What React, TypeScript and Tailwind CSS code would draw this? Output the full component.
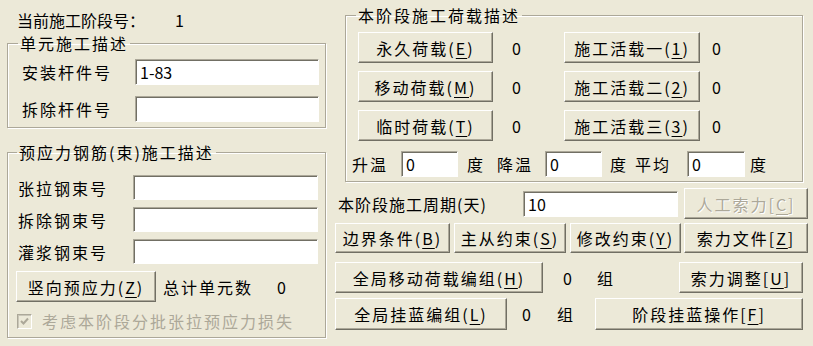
import type { ReactNode } from "react";

const face = "bg-[#ECE9D8]";

function Btn({
  children,
  className = "",
  disabled = false,
}: {
  children: ReactNode;
  className?: string;
  disabled?: boolean;
}) {
  return (
    <button
      className={`flex shrink-0 items-center justify-center border border-t-white border-l-white border-r-[#716F64] border-b-[#716F64] ${face} shadow-[inset_-1px_-1px_0_#ACA899] leading-[20px] tracking-[2px] ${
        disabled ? "text-[#ACA899] [text-shadow:1px_1px_0_#fff]" : "text-black"
      } ${className}`}
    >
      {children}
    </button>
  );
}

function Edit({ value = "", className = "" }: { value?: string; className?: string }) {
  return (
    <input
      readOnly
      value={value}
      className={`shrink-0 border border-t-[#ACA899] border-l-[#ACA899] border-r-white border-b-white bg-white px-[4px] text-[16px] leading-[20px] text-black shadow-[inset_1px_1px_0_#716F64] outline-none ${className}`}
    />
  );
}

function Group({
  title,
  className = "",
  legendClass = "",
  children,
}: {
  title: string;
  className?: string;
  legendClass?: string;
  children: ReactNode;
}) {
  return (
    <fieldset
      className={`border border-[#ACA899] shadow-[inset_1px_1px_0_#fff,1px_1px_0_#fff] ${className}`}
    >
      <legend className={`px-[2px] leading-[20px] tracking-[2px] ${legendClass}`}>{title}</legend>
      {children}
    </fieldset>
  );
}

function Key({ k }: { k: string }) {
  return <u className="underline-offset-[3px]">{k}</u>;
}

export default function App() {
  return (
    <div className="flex h-[346px] w-[813px] bg-[#ECE9D8] font-['Noto_Sans_CJK_SC',sans-serif] text-[16px] text-black">
      {/* left column */}
      <div className="w-[335px] shrink-0 pl-[7px] pt-[10px]">
        <div className="h-[20px] pl-[10px] leading-[20px]">
          当前施工阶段号：<span className="ml-[30px]">1</span>
        </div>

        <Group title="单元施工描述" className="mt-[3px] w-[319px] pb-[5px]" legendClass="ml-[10px]">
          <div className="mt-[6px] flex items-center pl-[14px]">
            <span className="w-[113px] tracking-[2px]">安装杆件号</span>
            <Edit value="1-83" className="h-[26px] w-[184px]" />
          </div>
          <div className="mt-[11px] flex items-center pl-[14px]">
            <span className="w-[113px] tracking-[2px]">拆除杆件号</span>
            <Edit className="h-[26px] w-[184px]" />
          </div>
        </Group>

        <Group
          title="预应力钢筋(束)施工描述"
          className="mt-[14px] w-[319px] pb-[6px]"
          legendClass="ml-[9px]"
        >
          <div className="mt-[13px] flex flex-col gap-[7px] pl-[10px]">
            {["张拉钢束号", "拆除钢束号", "灌浆钢束号"].map((t) => (
              <div key={t} className="flex items-center">
                <span className="w-[115px] tracking-[2px]">{t}</span>
                <Edit className="h-[25px] w-[185px]" />
              </div>
            ))}
          </div>
          <div className="mt-[7px] flex items-center pl-[8px]">
            <Btn className="h-[31px] w-[140px]">
              竖向预应力(<Key k="Z" />)
            </Btn>
            <span className="ml-[7px] tracking-[2px]">总计单元数</span>
            <span className="ml-[24px]">0</span>
          </div>
          <div className="mt-[9px] flex h-[20px] items-center pl-[9px]">
            <span className="flex h-[15px] w-[15px] items-center justify-center border border-t-[#ACA899] border-l-[#ACA899] border-r-white border-b-white shadow-[inset_1px_1px_0_#C9C6B8]">
              <svg width="11" height="11" viewBox="0 0 11 11">
                <path d="M2 5 L4.5 7.5 L9 2.5" fill="none" stroke="#ACA899" strokeWidth="2" />
              </svg>
            </span>
            <span className="ml-[10px] tracking-[2px] text-[#ACA899]">考虑本阶段分批张拉预应力损失</span>
          </div>
        </Group>
      </div>

      {/* right column */}
      <div className="w-[473px] shrink-0 pt-[5px]">
        <Group title="本阶段施工荷载描述" className="ml-[10px] w-[458px] pb-[4px]" legendClass="ml-[10px]">
          <div className="mt-[7px] grid grid-cols-[135px_71px_136px_1fr] gap-y-[8px] pl-[12px]">
            <Btn className="h-[31px]">
              永久荷载(<Key k="E" />)
            </Btn>
            <span className="flex items-center pl-[19px]">0</span>
            <Btn className="h-[31px]">
              施工活载一(<Key k="1" />)
            </Btn>
            <span className="flex items-center pl-[12px]">0</span>

            <Btn className="h-[31px]">
              移动荷载(<Key k="M" />)
            </Btn>
            <span className="flex items-center pl-[19px]">0</span>
            <Btn className="h-[31px]">
              施工活载二(<Key k="2" />)
            </Btn>
            <span className="flex items-center pl-[12px]">0</span>

            <Btn className="h-[31px]">
              临时荷载(<Key k="T" />)
            </Btn>
            <span className="flex items-center pl-[19px]">0</span>
            <Btn className="h-[31px]">
              施工活载三(<Key k="3" />)
            </Btn>
            <span className="flex items-center pl-[12px]">0</span>
          </div>
          <div className="mt-[10px] flex items-center pl-[6px] tracking-[2px]">
            <span className="w-[49px]">升温</span>
            <Edit value="0" className="h-[26px] w-[57px]" />
            <span className="w-[39px] pl-[9px]">度</span>
            <span className="w-[48px]">降温</span>
            <Edit value="0" className="h-[26px] w-[57px]" />
            <span className="w-[33px] pl-[8px]">度</span>
            <span className="w-[52px]">平均</span>
            <Edit value="0" className="h-[26px] w-[58px]" />
            <span className="pl-[5px]">度</span>
          </div>
        </Group>

        <div className="mt-[6px] flex h-[31px] items-center">
          <span className="w-[188px] pl-[3px] tracking-[1px]">本阶段施工周期(天)</span>
          <Edit value="10" className="h-[26px] w-[155px]" />
          <Btn disabled className="ml-[6px] h-[31px] w-[124px]">
            人工索力[<Key k="C" />]
          </Btn>
        </div>

        <div className="mt-[4px] flex h-[30px]">
          <Btn className="h-[30px] w-[115px]">
            边界条件(<Key k="B" />)
          </Btn>
          <Btn className="ml-[4px] h-[30px] w-[112px]">
            主从约束(<Key k="S" />)
          </Btn>
          <Btn className="ml-[4px] h-[30px] w-[111px]">
            修改约束(<Key k="Y" />)
          </Btn>
          <Btn className="ml-[3px] h-[30px] w-[124px]">
            索力文件[<Key k="Z" />]
          </Btn>
        </div>

        <div className="mt-[9px] flex h-[31px] items-center">
          <Btn className="h-[31px] w-[208px]">
            全局移动荷载编组(<Key k="H" />)
          </Btn>
          <span className="ml-[20px] w-[34px]">0</span>
          <span>组</span>
          <Btn className="ml-auto mr-[5px] h-[31px] w-[124px]">
            索力调整[<Key k="U" />]
          </Btn>
        </div>

        <div className="mt-[5px] flex h-[32px] items-center">
          <Btn className="h-[32px] w-[172px]">
            全局挂蓝编组(<Key k="L" />)
          </Btn>
          <span className="ml-[15px] w-[35px]">0</span>
          <span>组</span>
          <Btn className="ml-auto mr-[5px] h-[32px] w-[208px]">
            阶段挂蓝操作[<Key k="F" />]
          </Btn>
        </div>
      </div>
    </div>
  );
}
